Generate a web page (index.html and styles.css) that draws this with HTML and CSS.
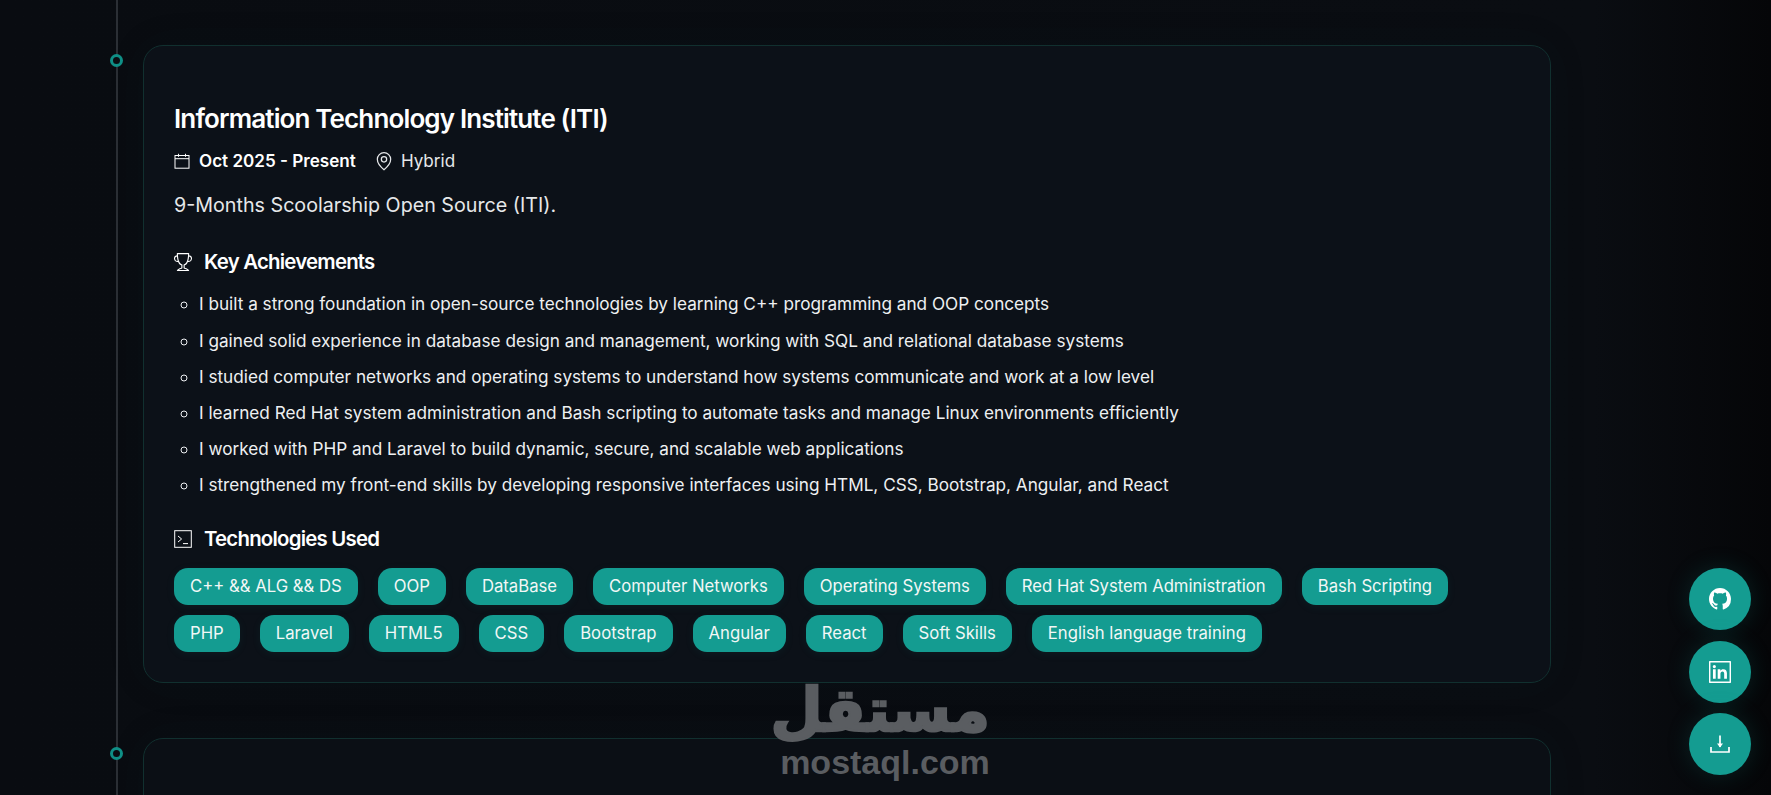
FILE: index.html
```html
<!DOCTYPE html>
<html lang="en">
<head>
<meta charset="utf-8">
<title>Experience</title>
<link rel="stylesheet" href="styles.css">
</head>
<body>
<main class="timeline">
  <article class="item">
    <span class="dot"></span>
    <div class="card">
      <h3 class="title">Information Technology Institute (ITI)</h3>
      <div class="meta">
        <span class="meta-item meta-date">
          <svg class="icon line-icon" viewBox="0 0 16 16"><rect x="1" y="2.5" width="14" height="12.7"/><path d="M1 5.7h14M4.5.8v3M11.5.8v3"/></svg>
          Oct 2025 - Present
        </span>
        <span class="meta-item">
          <svg class="icon pin line-icon" viewBox="0 0 24 24"><path d="M20 10c0 6-8 12.5-8 12.5S4 16 4 10a8 8 0 0 1 16 0Z"/><circle cx="12" cy="10" r="3.2"/></svg>
          Hybrid
        </span>
      </div>
      <p class="desc">9-Months Scoolarship Open Source (ITI).</p>
      <h4 class="section-title section-key">
        <svg class="icon icon-lg" viewBox="0 0 16 16"><path d="M2.5.5A.5.5 0 0 1 3 0h10a.5.5 0 0 1 .5.5q0 .807-.034 1.536a3 3 0 1 1-1.133 5.89c-.79 1.865-1.878 2.777-2.833 3.011v2.173l1.425.356c.194.048.377.135.537.255L13.3 15.1a.5.5 0 0 1-.3.9H3a.5.5 0 0 1-.3-.9l1.838-1.379c.16-.12.343-.207.537-.255L6.5 13.11v-2.173c-.955-.234-2.043-1.146-2.833-3.012a3 3 0 1 1-1.132-5.89A33 33 0 0 1 2.5.5m.099 2.54a2 2 0 0 0 .72 3.935c-.333-1.05-.588-2.346-.72-3.935m10.083 3.935a2 2 0 0 0 .72-3.935c-.133 1.59-.388 2.885-.72 3.935M3.504 1q.01.775.056 1.469c.13 2.028.457 3.546.87 4.667C5.294 9.48 6.484 10 7 10a.5.5 0 0 1 .5.5v2.61a1 1 0 0 1-.757.97l-1.426.356a.5.5 0 0 0-.179.085L4.5 15h7l-.638-.479a.5.5 0 0 0-.18-.085l-1.425-.356a1 1 0 0 1-.757-.97V10.5A.5.5 0 0 1 9 10c.516 0 1.706-.52 2.57-2.864.413-1.12.74-2.64.87-4.667q.045-.694.056-1.469z"/></svg>
        Key Achievements
      </h4>
      <ul class="achievements">
        <li>I built a strong foundation in open-source technologies by learning C++ programming and OOP concepts</li>
        <li>I gained solid experience in database design and management, working with SQL and relational database systems</li>
        <li>I studied computer networks and operating systems to understand how systems communicate and work at a low level</li>
        <li>I learned Red Hat system administration and Bash scripting to automate tasks and manage Linux environments efficiently</li>
        <li>I worked with PHP and Laravel to build dynamic, secure, and scalable web applications</li>
        <li>I strengthened my front-end skills by developing responsive interfaces using HTML, CSS, Bootstrap, Angular, and React</li>
      </ul>
      <h4 class="section-title section-tech">
        <svg class="icon icon-lg line-icon" viewBox="0 0 18 18"><rect x=".7" y=".7" width="16.6" height="16.6"/><path d="M4 6l3.6 3L4 12M9 13.6h5"/></svg>
        Technologies Used
      </h4>
      <div class="chips">
        <span class="chip">C++ &amp;&amp; ALG &amp;&amp; DS</span>
        <span class="chip">OOP</span>
        <span class="chip">DataBase</span>
        <span class="chip">Computer Networks</span>
        <span class="chip">Operating Systems</span>
        <span class="chip">Red Hat System Administration</span>
        <span class="chip">Bash Scripting</span>
        <span class="chip">PHP</span>
        <span class="chip">Laravel</span>
        <span class="chip">HTML5</span>
        <span class="chip">CSS</span>
        <span class="chip">Bootstrap</span>
        <span class="chip">Angular</span>
        <span class="chip">React</span>
        <span class="chip">Soft Skills</span>
        <span class="chip">English language training</span>
      </div>
    </div>
  </article>
  <article class="item">
    <span class="dot"></span>
    <div class="card card-next"></div>
  </article>
</main>

<div class="watermark" aria-label="mostaql.com">
  <div class="wm-ar" lang="ar" dir="rtl">مستقل</div>
  <div class="wm-en">mostaql.com</div>
</div>

<nav class="fabs">
  <a class="fab" href="#" aria-label="GitHub">
    <svg class="fab-icon" viewBox="0 0 16 16"><path d="M8 0C3.58 0 0 3.58 0 8c0 3.54 2.29 6.53 5.47 7.59.4.07.55-.17.55-.38 0-.19-.01-.82-.01-1.49-2.01.37-2.53-.49-2.69-.94-.09-.23-.48-.94-.82-1.13-.28-.15-.68-.52-.01-.53.63-.01 1.08.58 1.23.82.72 1.21 1.87.87 2.33.66.07-.52.28-.87.51-1.07-1.78-.2-3.64-.89-3.64-3.95 0-.87.31-1.59.82-2.15-.08-.2-.36-1.02.08-2.12 0 0 .67-.21 2.2.82.64-.18 1.32-.27 2-.27s1.36.09 2 .27c1.53-1.04 2.2-.82 2.2-.82.44 1.1.16 1.92.08 2.12.51.56.82 1.27.82 2.15 0 3.07-1.87 3.75-3.65 3.95.29.25.54.73.54 1.48 0 1.07-.01 1.93-.01 2.2 0 .21.15.46.55.38A8.01 8.01 0 0 0 16 8c0-4.42-3.58-8-8-8"/></svg>
  </a>
  <a class="fab" href="#" aria-label="LinkedIn">
    <svg class="fab-icon" viewBox="0 0 20 20"><path fill-rule="evenodd" d="M.6 0h18.8a.6.6 0 0 1 .6.6v18.8a.6.6 0 0 1-.6.6H.6a.6.6 0 0 1-.6-.6V.6A.6.6 0 0 1 .6 0zM1.3 1.3v17.4h17.4V1.3z"/><path d="M3.6 7.6h2.5v8.6H3.6zM4.85 3.6a1.45 1.45 0 1 1 0 2.9 1.45 1.45 0 0 1 0-2.9zM7.9 7.6h2.4v1.2c.5-.8 1.4-1.4 2.7-1.4 2.3 0 3.3 1.4 3.3 3.8v5h-2.5v-4.5c0-1.3-.4-2.2-1.5-2.2-1.2 0-1.9.9-1.9 2.2v4.5H7.9z"/></svg>
  </a>
  <a class="fab" href="#" aria-label="Download CV">
    <svg class="fab-icon fab-line" viewBox="0 0 22 22"><path d="M2 14v5h18v-5M11 2.5V14"/><path class="arrow-head" d="M8 10.5h6L11 14.5z"/></svg>
  </a>
</nav>
</body>
</html>
```

FILE: styles.css
```css
* { box-sizing: border-box; }

html, body { height: 100%; }

body {
  margin: 0;
  overflow: hidden;
  background: linear-gradient(90deg, #090c11 0%, #0a0d12 90%, #050608 100%);
  color: #fff;
  font-family: Inter, "Noto Sans", sans-serif;
}

.timeline {
  position: relative;
  padding: 45px 220px 0 143px;
}

.timeline::before {
  content: "";
  position: absolute;
  top: 0;
  bottom: -200px;
  left: 116px;
  width: 2px;
  background: #2b2f35;
}

.item {
  position: relative;
  margin-bottom: 55px;
}

.dot {
  position: absolute;
  left: -33px;
  top: 8.5px;
  width: 13px;
  height: 13px;
  border: 3.5px solid #0f8f86;
  border-radius: 50%;
  background: #0a0d12;
}

.card {
  padding: 53px 30px 30px;
  border: 1px solid #11302f;
  border-radius: 20px;
  background: #0c1118;
  box-shadow: 0 0 40px rgba(20, 60, 60, 0.08);
}

.card-next {
  height: 300px;
  background: #0b0f15;
}

.title {
  margin: 0;
  font-size: 26px;
  line-height: 40px;
  font-weight: 600;
  letter-spacing: -0.86px;
}

.meta {
  display: flex;
  gap: 20px;
  margin-top: 10px;
  font-size: 17.1px;
  line-height: 24px;
}

.meta-item {
  display: inline-flex;
  align-items: center;
  gap: 9px;
  color: #e6e8ea;
}

.meta-date {
  color: #fff;
  font-weight: 600;
}

.icon {
  width: 16px;
  height: 16px;
  fill: currentColor;
  flex: none;
}

.line-icon {
  fill: none;
  stroke: currentColor;
  stroke-width: 1;
}

.pin {
  width: 20px;
  height: 20px;
  stroke-width: 1.5;
  margin-right: -2px;
  margin-left: -2px;
}

.icon-lg {
  width: 18px;
  height: 18px;
}

.desc {
  margin: 18px 0 0;
  font-size: 19.7px;
  line-height: 28px;
  color: #e6e8ea;
}

.section-title {
  display: flex;
  align-items: center;
  gap: 12px;
  margin: 0;
  font-size: 20.4px;
  line-height: 28px;
  font-weight: 600;
  letter-spacing: -0.78px;
}

.section-key { margin-top: 29px; }

.section-tech { margin-top: 28px; }

.achievements {
  margin: 16.4px 0 0;
  padding: 0 0 0 25px;
  list-style: circle;
  font-size: 17.18px;
  color: #eef0f2;
}

.achievements li {
  line-height: 24px;
  margin-bottom: 12.2px;
}

.chips {
  display: flex;
  flex-wrap: wrap;
  gap: 10px 20px;
  margin-top: 15px;
}

.chip {
  padding: 0 16px;
  border-radius: 14px;
  background: #149c91;
  color: #f2f7f6;
  font-size: 16.7px;
  line-height: 37px;
  box-shadow: 0 2px 10px rgba(20, 156, 145, 0.08);
}

.watermark {
  position: absolute;
  left: 780px;
  top: 675px;
  width: 210px;
  text-align: center;
  color: #5a5d61;
}

.wm-ar {
  font-family: "DejaVu Sans", sans-serif;
  font-size: 60px;
  line-height: 70px;
  font-weight: 700;
  -webkit-text-stroke: 2.5px #5a5d61;
  stroke-linejoin: round;
}

.wm-en {
  font-family: "Liberation Sans", sans-serif;
  font-size: 34px;
  line-height: 34px;
  font-weight: 700;
  letter-spacing: 0;
}

.fabs {
  position: fixed;
  right: 20px;
  bottom: 20px;
  display: flex;
  flex-direction: column;
  gap: 10.5px;
}

.fab {
  display: flex;
  align-items: center;
  justify-content: center;
  width: 62px;
  height: 62px;
  border-radius: 50%;
  background: #149c91;
  color: #fff;
  box-shadow: 0 0 24px rgba(20, 156, 145, 0.18);
}

.fab-icon {
  width: 22px;
  height: 22px;
  fill: currentColor;
}

.fab-line {
  fill: none;
  stroke: currentColor;
  stroke-width: 1.7;
}

.arrow-head {
  fill: currentColor;
  stroke: none;
}
```
